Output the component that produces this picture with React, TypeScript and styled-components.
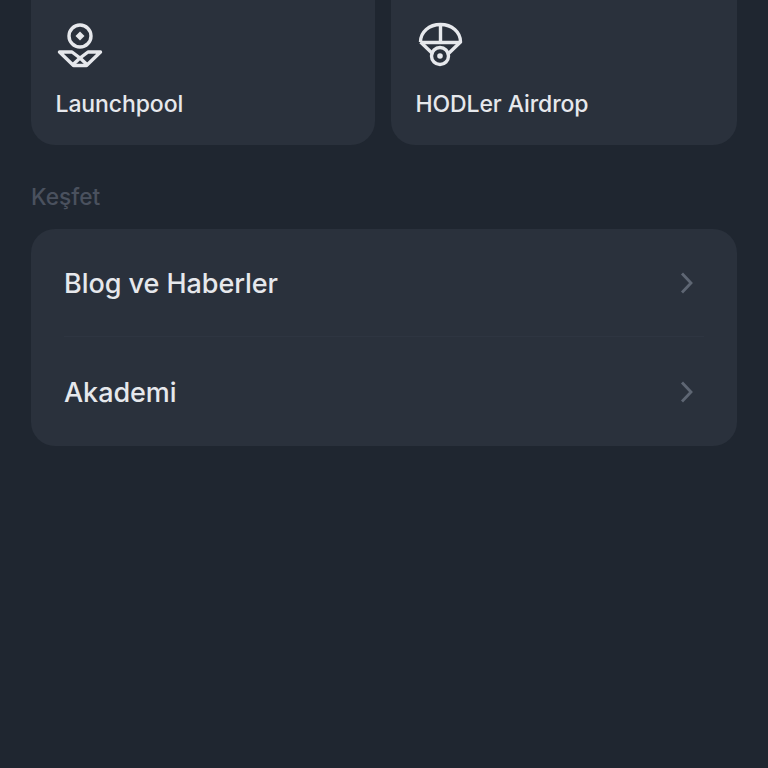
import React from "react";
import styled, { createGlobalStyle } from "styled-components";

const Global = createGlobalStyle`
  html, body { margin: 0; padding: 0; background: #1f2630; height: 768px; overflow: hidden; }
  #root { height: 768px; }
`;

const Page = styled.div`
  height: 768px;
  overflow: hidden;
  box-sizing: border-box;
  padding: 0 31px 0 31px;
  background: #1f2630;
  font-family: "Inter", "Noto Sans", sans-serif;
  -webkit-font-smoothing: antialiased;
`;

const TileRow = styled.div`
  display: grid;
  grid-template-columns: 344px 346px;
  gap: 16px;
  margin-top: -30px;
`;

const Tile = styled.div`
  height: 175px;
  box-sizing: border-box;
  padding: 50px 24px 0 25px;
  background: #2a313c;
  border-radius: 24px;
  display: flex;
  flex-direction: column;
  align-items: flex-start;
`;

const TileIcon = styled.svg`
  width: 48px;
  height: 48px;
  display: block;
  margin-bottom: 20px;
  fill: none;
  stroke: #e6e8ec;
  stroke-width: 3.4;
`;

const TileLabel = styled.div`
  font-size: 23px;
  line-height: 32px;
  font-weight: 500;
  letter-spacing: -0.1px;
  color: #e6e8ec;
  margin-left: -0.5px;
`;

const SectionTitle = styled.div`
  margin-top: 37px;
  height: 30px;
  font-size: 22.7px;
  line-height: 30px;
  font-weight: 500;
  color: #4a515e;
`;

const ListCard = styled.div`
  margin-top: 17px;
  width: 706px;
  background: #2a313c;
  border-radius: 24px;
  padding: 0 33px 1px;
  box-sizing: border-box;
`;

const Row = styled.div<{ $divided?: boolean }>`
  height: 108px;
  padding-top: 1px;
  box-sizing: border-box;
  display: flex;
  align-items: center;
  justify-content: space-between;
  border-bottom: ${(p) => (p.$divided ? "1px solid #2e3541" : "none")};
`;

const RowLabel = styled.div`
  font-size: 27px;
  line-height: 36px;
  padding-top: 2px;
  font-weight: 500;
  letter-spacing: -0.05px;
  color: #e6e8ec;
`;

const Chevron = styled.svg`
  width: 16px;
  height: 24px;
  margin-right: 9px;
  fill: none;
  stroke: #5e6673;
  stroke-width: 2.8;
`;

const LaunchpoolIcon = () => (
  <TileIcon viewBox="0 0 48 48">
    <circle cx="24" cy="16" r="11" />
    <path d="M24 11.500l4.500 4.500-4.500 4.500-4.500-4.500z" fill="#e6e8ec" stroke="none" />
    <path d="M3.500 32H16l8 6 8-6h12.500l-14 13.500h-13z" strokeLinejoin="round" />
    <path d="M24 38l-8 7.500M24 38l8 7.500" />
  </TileIcon>
);

const AirdropIcon = () => (
  <TileIcon viewBox="0 0 48 48">
    <path d="M4.500 22C4.500 12 13 4.500 24.500 4.500S44.500 12 44.500 22L32 34M4.500 22L17 34" strokeLinejoin="round" />
    <path d="M5 22.500h39M24.500 4.500v18" />
    <circle cx="24" cy="36" r="8.500" />
    <circle cx="24" cy="36" r="2.800" fill="#e6e8ec" stroke="none" />
  </TileIcon>
);

const ChevronIcon = () => (
  <Chevron viewBox="0 0 16 24">
    <path d="M3 2.500l9 9.500-9 9.500" />
  </Chevron>
);

export default function App() {
  return (
    <Page>
      <Global />
      <TileRow>
        <Tile>
          <LaunchpoolIcon />
          <TileLabel>Launchpool</TileLabel>
        </Tile>
        <Tile>
          <AirdropIcon />
          <TileLabel>HODLer Airdrop</TileLabel>
        </Tile>
      </TileRow>
      <SectionTitle>Keşfet</SectionTitle>
      <ListCard>
        <Row $divided>
          <RowLabel>Blog ve Haberler</RowLabel>
          <ChevronIcon />
        </Row>
        <Row>
          <RowLabel>Akademi</RowLabel>
          <ChevronIcon />
        </Row>
      </ListCard>
    </Page>
  );
}
